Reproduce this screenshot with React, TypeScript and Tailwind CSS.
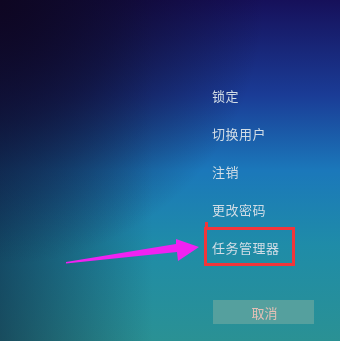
import React from 'react';

const items = ['锁定', '切换用户', '注销', '更改密码', '任务管理器'];

export default function App() {
  return (
    <div
      className="relative h-[341px] w-[340px] overflow-hidden bg-[radial-gradient(ellipse_at_0%_0%,#0e0622_0%,rgba(14,6,34,0.6)_25%,rgba(14,6,34,0)_55%),linear-gradient(90deg,rgba(10,20,50,0.55)_0%,rgba(10,20,50,0)_45%),linear-gradient(180deg,#16105a_0%,#1a3c96_28%,#1b78ba_50%,#1f8ca8_72%,#2a9194_100%)]"
      style={{ fontFamily: '"Noto Sans CJK SC", "Noto Sans", sans-serif' }}
    >
      <div className="flex flex-col pl-[212px] pt-[76px]">
        {items.map((label) => (
          <div key={label} className="flex h-[38px] items-center">
            <span className="text-[13px] leading-none tracking-[0.5px] text-[#d2dde6] blur-[0.35px]">
              {label}
            </span>
          </div>
        ))}
        <div className="ml-[1px] mt-[34px] flex h-[24px] w-[101px] items-center justify-center bg-[#55a09e]">
          <span className="pl-[2px] text-[13px] leading-none text-[#e6c0b6] blur-[0.5px]">取消</span>
        </div>
      </div>

      {/* annotation: red frame */}
      <div className="absolute left-[204px] top-[227px] h-[39px] w-[91px] border-[3px] border-[#f2353a]" />
      <div className="absolute left-[205px] top-[222px] h-[6px] w-[3px] bg-[#f2353a]" />

      {/* annotation: magenta arrow */}
      <svg className="absolute left-0 top-0" width="340" height="341" viewBox="0 0 340 341">
        <polygon
          points="66,262 176,244 176,239 199,247 178,261 177,252 66,263.5"
          fill="#f022f2"
        />
      </svg>
    </div>
  );
}
